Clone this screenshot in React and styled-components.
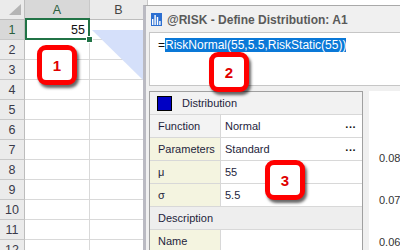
import React from "react";
import styled, { createGlobalStyle } from "styled-components";

const GlobalStyle = createGlobalStyle`
  html, body { margin: 0; padding: 0; background: #fff; }
  body { font-family: "Liberation Sans", Arial, sans-serif; }
`;

const Screen = styled.div`
  position: relative;
  width: 400px;
  height: 250px;
  overflow: hidden;
  background: #fff;
`;

const Sheet = styled.div`
  display: grid;
  grid-template-columns: 25px 65px 58px;
  grid-auto-rows: 20px;
  font-family: "Liberation Sans", Arial, sans-serif;
  font-size: 12.5px;
  color: #444;
`;

const Corner = styled.div`
  position: relative;
  background: #ebebeb;
  border-right: 1px solid #bdbdbd;
  border-bottom: 1px solid #bdbdbd;
  box-sizing: border-box;

  &::after {
    content: "";
    position: absolute;
    right: 3px;
    bottom: 4px;
    border-left: 12px solid transparent;
    border-bottom: 11px solid #b5b5b5;
  }
`;

const ColHead = styled.div`
  display: flex;
  align-items: center;
  justify-content: center;
  background: ${(p) => (p.$selected ? "#d8d8d8" : "#ebebeb")};
  color: ${(p) => (p.$selected ? "#2b5f3c" : "#444")};
  border-right: 1px solid #c8c8c8;
  border-bottom: 1px solid #bdbdbd;
  box-sizing: border-box;
`;

const RowHead = styled.div`
  display: flex;
  align-items: center;
  justify-content: center;
  background: ${(p) => (p.$selected ? "#d8d8d8" : "#ebebeb")};
  color: ${(p) => (p.$selected ? "#2b5f3c" : "#3a3a4a")};
  border-right: 1px solid #bdbdbd;
  border-bottom: 1px solid #c8c8c8;
  box-sizing: border-box;
`;

const Cell = styled.div`
  position: relative;
  display: flex;
  align-items: center;
  justify-content: flex-end;
  padding-right: 4px;
  color: #111;
  border-right: 1px solid #d9d9d9;
  border-bottom: 1px solid #d9d9d9;
  box-sizing: border-box;

  ${(p) =>
    p.$active &&
    `
    &::after {
      content: "";
      position: absolute;
      left: 0;
      top: -2px;
      right: -1px;
      bottom: -1px;
      border: 2px solid #217346;
    }
    &::before {
      content: "";
      position: absolute;
      right: -4px;
      bottom: -4px;
      width: 5px;
      height: 5px;
      background: #217346;
      border: 1px solid #fff;
      z-index: 2;
    }
  `}
`;

const Pointer = styled.svg`
  position: absolute;
  left: 90px;
  top: 30px;
`;

const Dialog = styled.div`
  position: absolute;
  left: 143px;
  top: 5px;
  width: 280px;
  box-sizing: border-box;
  display: flex;
  flex-direction: column;
  padding-left: 3px;
  background: #f0f0f0;
  border-left: 3px solid #babac2;
  border-top: 1px solid #a9a9a9;
`;

const TitleBar = styled.div`
  flex-shrink: 0;
  height: 26px;
  display: flex;
  align-items: center;
  gap: 5px;
  padding-left: 2px;
  padding-top: 1px;
  box-sizing: border-box;
`;

const Title = styled.span`
  font-family: "Liberation Sans", Arial, sans-serif;
  font-weight: bold;
  font-size: 12px;
  color: #5a5a5a;
`;

const FormulaBox = styled.div`
  flex-shrink: 0;
  height: 54px;
  box-sizing: border-box;
  padding: 5px 8px;
  background: #fff;
  border: 1px solid #c6c6c6;
  border-right: none;
  font-family: "Liberation Sans", Arial, sans-serif;
  font-size: 12px;
  line-height: 14px;
  color: #111;
  white-space: nowrap;
`;

const Selected = styled.span`
  background: #0a78d7;
  color: #fff;
`;

const Lower = styled.div`
  flex-shrink: 0;
  display: flex;
  align-items: flex-start;
  gap: 6px;
  margin-top: 5px;
`;

const PropGrid = styled.div`
  width: 214px;
  flex-shrink: 0;
  box-sizing: border-box;
  display: grid;
  grid-template-columns: 71px 1fr;
  grid-auto-rows: 23px;
  background: #fff;
  border: 1px solid #a0a0a0;
  border-bottom: none;
  font-family: "Liberation Sans", Arial, sans-serif;
  font-size: 11px;
  color: #1e1e3c;
`;

const GridHeader = styled.div`
  grid-column: 1 / -1;
  display: flex;
  align-items: center;
  gap: 10px;
  padding-left: 7px;
  background: #f2f2f2;
  border-bottom: 1px solid #d8d8d8;
`;

const Swatch = styled.span`
  width: 13px;
  height: 13px;
  background: #0000c4;
  border: 1px solid #000;
`;

const Label = styled.div`
  display: flex;
  align-items: center;
  padding-left: 8px;
  box-sizing: border-box;
  background: ${(p) => p.$tone};
  border-right: 1px solid #d8d8d8;
  border-bottom: 1px solid #d8d8d8;
`;

const Value = styled.div`
  display: flex;
  align-items: center;
  justify-content: space-between;
  padding: 0 6px 0 4px;
  border-bottom: 1px solid #d8d8d8;
`;

const Dots = styled.span`
  font-weight: bold;
  color: #111;
  letter-spacing: 0.5px;
  margin-top: -4px;
`;

const Section = styled.div`
  grid-column: 1 / -1;
  display: flex;
  align-items: center;
  padding-left: 8px;
  background: #eeeeee;
  border-bottom: 1px solid #d8d8d8;
`;

const ChartPanel = styled.div`
  flex: 1;
  height: 170px;
  box-sizing: border-box;
  background: #fff;
  padding: 60px 0 0 10px;
  display: flex;
  flex-direction: column;
  gap: 28px;
  font-family: "Liberation Sans", Arial, sans-serif;
  font-size: 11px;
  color: #333;
`;

const Tick = styled.span`
  line-height: 14px;
`;

const Callout = styled.div`
  position: absolute;
  left: ${(p) => p.$x}px;
  top: ${(p) => p.$y}px;
  width: 40px;
  height: 40px;
  box-sizing: border-box;
  display: flex;
  align-items: center;
  justify-content: center;
  background: #fff;
  border: 5px solid #f00;
  border-radius: 9px;
  box-shadow: 2px 3px 3px rgba(0, 0, 0, 0.6);
  font-family: "Liberation Sans", Arial, sans-serif;
  font-weight: bold;
  font-size: 15px;
  color: #e00000;
  z-index: 5;
`;

const RiskIcon = () => (
  <svg width="11" height="13" viewBox="0 0 11 13">
    <rect width="11" height="13" fill="#2c6fd1" />
    <rect x="1" y="6" width="1.4" height="6" fill="#fff" />
    <rect x="3.4" y="2" width="1.4" height="10" fill="#fff" />
    <rect x="5.8" y="4" width="1.4" height="8" fill="#fff" />
    <rect x="8.2" y="8" width="1.4" height="4" fill="#fff" />
  </svg>
);

const rows = [1, 2, 3, 4, 5, 6, 7, 8, 9, 10, 11, 12];

const App = () => {
  return (
    <Screen>
      <GlobalStyle />
      <Sheet>
        <Corner />
        <ColHead $selected>A</ColHead>
        <ColHead>B</ColHead>
        {rows.map((r) => (
          <React.Fragment key={r}>
            <RowHead $selected={r === 1}>{r}</RowHead>
            <Cell $active={r === 1}>{r === 1 ? "55" : ""}</Cell>
            <Cell />
          </React.Fragment>
        ))}
      </Sheet>

      <Pointer width="53" height="50" viewBox="0 0 53 50">
        <polygon points="2,0 53,0 53,50" fill="#d5e0fa" />
      </Pointer>

      <Dialog>
        <TitleBar>
          <RiskIcon />
          <Title>@RISK - Define Distribution: A1</Title>
        </TitleBar>
        <FormulaBox>
          =<Selected>RiskNormal(55,5.5,RiskStatic(55))</Selected>
        </FormulaBox>
        <Lower>
          <PropGrid>
            <GridHeader>
              <Swatch />
              Distribution
            </GridHeader>
            <Label $tone="#f3f3f3">Function</Label>
            <Value>
              Normal<Dots>...</Dots>
            </Value>
            <Label $tone="#f4f4e0">Parameters</Label>
            <Value>
              Standard<Dots>...</Dots>
            </Value>
            <Label $tone="#f4f4e0">μ</Label>
            <Value>55</Value>
            <Label $tone="#f4f4e0">σ</Label>
            <Value>5.5</Value>
            <Section>Description</Section>
            <Label $tone="#f4f4e0">Name</Label>
            <Value />
          </PropGrid>
          <ChartPanel>
            <Tick>0.08</Tick>
            <Tick>0.07</Tick>
            <Tick>0.06</Tick>
          </ChartPanel>
        </Lower>
      </Dialog>

      <Callout $x={37} $y={45}>1</Callout>
      <Callout $x={209} $y={52}>2</Callout>
      <Callout $x={265} $y={160}>3</Callout>
    </Screen>
  );
};

export default App;
